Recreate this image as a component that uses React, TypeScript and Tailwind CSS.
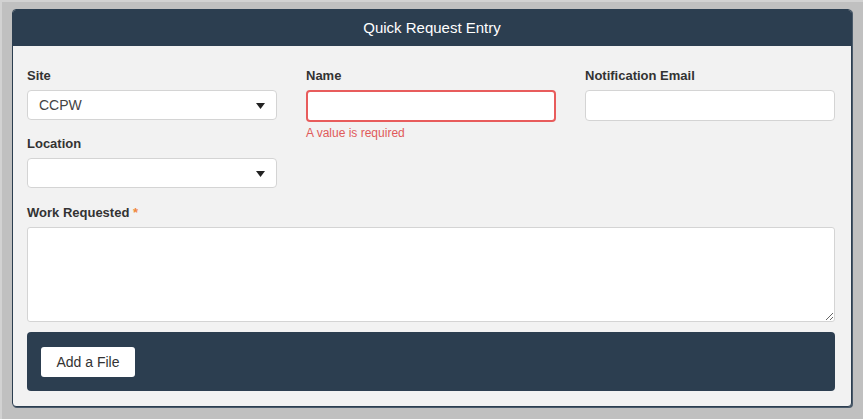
import React from 'react';

const Caret = () => (
  <svg width="9" height="6" viewBox="0 0 9 6" className="absolute right-[11px] top-[12px]">
    <path d="M0 0 L9 0 L4.5 6 Z" fill="#222" />
  </svg>
);

const Label: React.FC<{ children: React.ReactNode }> = ({ children }) => (
  <div className="text-[13px] leading-[18px] font-bold text-[#333] mb-[5px]">{children}</div>
);

const SelectBox: React.FC<{ value?: string }> = ({ value }) => (
  <div className="relative h-[30px] w-full bg-white border border-[#d4d4d4] rounded-[4px] pl-[11px] text-[14px] leading-[28px] text-[#444]">
    {value}
    <Caret />
  </div>
);

export default function App() {
  return (
    <div
      className="w-[863px] h-[419px] bg-[#c0c0c0] border-l-2 border-t-2 border-[#d2d2d2] pt-[7px] pl-[10px] pr-[11px]"
      style={{ fontFamily: '"Liberation Sans", Arial, sans-serif' }}
    >
      <div className="w-[840px] border border-[#2c3e50] rounded-[4px] bg-[#f2f2f2] overflow-hidden shadow-[1px_1px_0_#4a5a6a]">
        <div className="h-[36px] bg-[#2c3e50] flex items-center justify-center text-white text-[15px]">
          Quick Request Entry
        </div>
        <div className="pl-[14px] pr-[16px] pt-[21px] pb-[15px]">
          <div className="grid grid-cols-3 gap-x-[29px]">
            <div className="flex flex-col">
              <Label>Site</Label>
              <SelectBox value="CCPW" />
              <div className="mt-[15px]">
                <Label>Location</Label>
                <SelectBox />
              </div>
            </div>
            <div className="flex flex-col">
              <Label>Name</Label>
              <input
                className="h-[32px] w-full bg-white border-2 border-[#e85c5c] rounded-[4px] outline-none px-[10px] text-[13px]"
                aria-invalid="true"
              />
              <div className="mt-[3px] text-[12px] leading-[16px] text-[#e05a5a]">A value is required</div>
            </div>
            <div className="flex flex-col">
              <Label>Notification Email</Label>
              <input className="h-[31px] w-full bg-white border border-[#d4d4d4] rounded-[4px] outline-none px-[10px] text-[13px]" />
            </div>
          </div>
          <div className="mt-[16px]">
            <Label>
              Work Requested <span className="text-[#f0883e]">*</span>
            </Label>
            <textarea className="block w-full h-[95px] bg-white border border-[#d4d4d4] rounded-[3px] outline-none p-[8px] text-[13px]" />
          </div>
          <div className="mt-[10px] h-[59px] bg-[#2c3e50] rounded-[4px] pl-[14px] pt-[15px]">
            <button className="h-[30px] w-[94px] bg-white rounded-[3px] text-[14px] text-[#333]">Add a File</button>
          </div>
        </div>
      </div>
    </div>
  );
}
